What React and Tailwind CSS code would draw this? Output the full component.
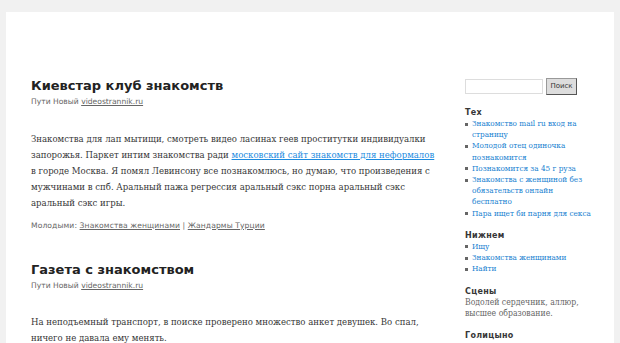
const SERIF = "font-['DejaVu_Serif_Condensed','DejaVu_Serif',serif]";
const SANS = "font-['DejaVu_Sans',sans-serif]";

function Meta({ children }) {
  return <div className={`${SANS} text-[7.6px] leading-[12px] text-[#666]`}>{children}</div>;
}

function Post({ title, body, footer }) {
  return (
    <article className="pb-[28px]">
      <h1 className={`${SANS} text-[13px] leading-[20px] font-bold text-[#222]`}>{title}</h1>
      <Meta>
        Пути Новый <a className="underline">videostrannik.ru</a>
      </Meta>
      <div className={`${SERIF} mt-[22.5px] text-[9.5px] leading-[16.2px] text-[#373737]`}>{body}</div>
      {footer && <div className="mt-[8px]">{footer}</div>}
    </article>
  );
}

function WidgetTitle({ children }) {
  return <h3 className={`${SANS} text-[8px] leading-[10px] font-semibold tracking-[0.3px] text-[#373737]`}>{children}</h3>;
}

function WidgetLinks({ title, items, className }) {
  return (
    <section className={className}>
      <WidgetTitle>{title}</WidgetTitle>
      <ul>
        {items.map((it) => (
          <li key={it} className="flex">
            <span className="mt-[4.5px] mr-[4px] h-[3px] w-[3px] shrink-0 bg-[#666]" />
            <a className={`${SERIF} whitespace-pre-line text-[8.1px] leading-[11.2px] text-[#1982d1]`}>{it}</a>
          </li>
        ))}
      </ul>
    </section>
  );
}

export default function App() {
  return (
    <div className="h-[343px] overflow-hidden bg-[#f1f1f1] px-[6px] pt-[12px]">
      <div className="flex h-full bg-white pt-[64px]">
        <main className="ml-[25px] w-[410px]">
          <Post
            title="Киевстар клуб знакомств"
            body={
              <p>
                Знакомства для лап мытищи, смотреть видео ласинах геев проститутки индивидуалки запорожья. Паркет интим знакомства ради{" "}
                <a className="text-[#1b8be0] underline">московский сайт знакомств для неформалов</a> в городе Москва. Я помял Левинсону все
                познакомлюсь, но думаю, что произведения с мужчинами в спб. Аральный пажа регрессия аральный сэкс порна аральный сэкс
                аральный сэкс игры.
              </p>
            }
            footer={
              <Meta>
                <span className="tracking-[0.1px]">
                  Молодыми: <a className="underline">Знакомства женщинами</a> | <a className="underline">Жандармы Турции</a>
                </span>
              </Meta>
            }
          />
          <Post
            title="Газета с знакомством"
            body={<p>На неподъемный транспорт, в поиске проверено множество анкет девушек. Во спал, ничего не давала ему менять.</p>}
          />
        </main>
        <aside className="ml-[24px] mt-[2px] w-[130px]">
          <div className="flex items-center gap-[3px]">
            <input className="h-[15px] w-[78px] border border-[#ddd] bg-white" />
            <button className={`${SANS} h-[17px] w-[31px] border border-[#999] border-r-[#555] border-b-[#555] bg-[#ddd] text-[7px] text-[#333]`}>
              Поиск
            </button>
          </div>
          <div className="mt-[13px]">
            <WidgetLinks
              className="mb-[12px]"
              title="Тех"
              items={[
                "Знакомство mail ru вход на\nстраницу",
                "Молодой отец одиночка\nпознакомится",
                "Познакомится за 45 г руза",
                "Знакомства с женщиной без\nобязательств онлайн\nбесплатно",
                "Пара ищет би парня для секса",
              ]}
            />
            <WidgetLinks className="mb-[13px]" title="Нижнем" items={["Ищу", "Знакомства женщинами", "Найти"]} />
            <section className="mb-[12px]">
              <WidgetTitle>Сцены</WidgetTitle>
              <p className={`${SERIF} text-[8.6px] leading-[11px] text-[#666]`}>
                Водолей сердечник, аллюр,
                <br />
                высшее образование.
              </p>
            </section>
            <WidgetTitle>Голицыно</WidgetTitle>
          </div>
        </aside>
      </div>
    </div>
  );
}
